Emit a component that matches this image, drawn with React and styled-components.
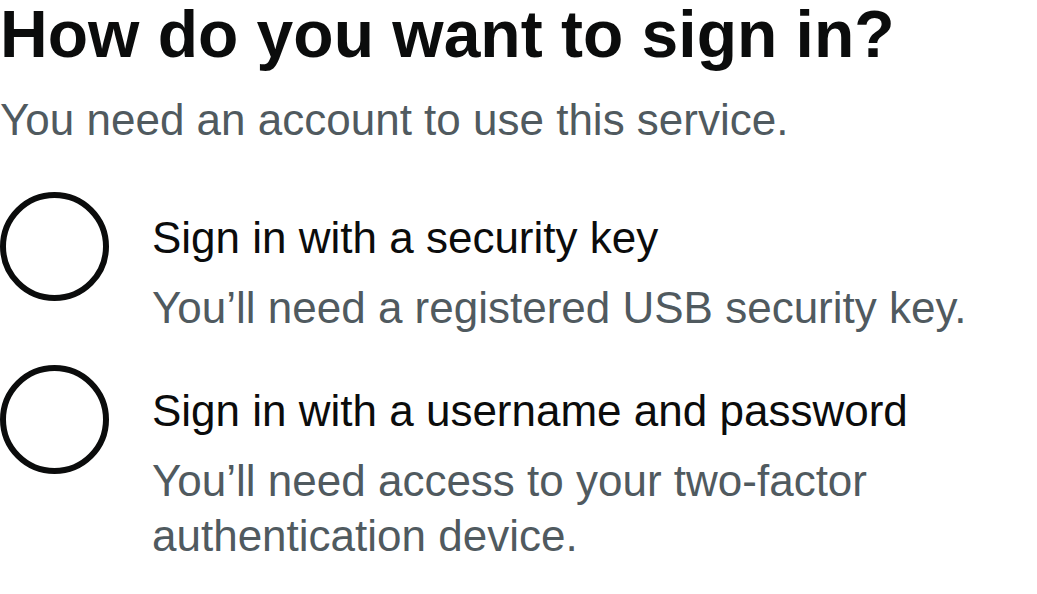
import React from 'react';
import styled, { createGlobalStyle } from 'styled-components';

const GlobalStyle = createGlobalStyle`
  html, body {
    margin: 0;
    padding: 0;
    background: #ffffff;
  }

  body {
    font-family: "Liberation Sans", Arial, sans-serif;
    color: #0b0c0c;
  }
`;

const options = [
  {
    id: 'security-key',
    label: 'Sign in with a security key',
    hint: 'You’ll need a registered USB security key.',
  },
  {
    id: 'password',
    label: 'Sign in with a username and password',
    hint: 'You’ll need access to your two-factor authentication device.',
  },
];

const App = () => (
  <>
    <GlobalStyle />
    <Page>
      <Fieldset>
        <Heading>How do you want to sign in?</Heading>
        <Lead>You need an account to use this service.</Lead>

        <Radios>
          {options.map((opt) => (
            <RadioItem key={opt.id}>
              <RadioInput type="radio" id={opt.id} name="sign-in" />
              <RadioText>
                <RadioLabel htmlFor={opt.id}>{opt.label}</RadioLabel>
                <Hint>{opt.hint}</Hint>
              </RadioText>
            </RadioItem>
          ))}
        </Radios>
      </Fieldset>
    </Page>
  </>
);

const Page = styled.main`
  width: 1037px;
  min-height: 594px;
  box-sizing: border-box;
`;

const Fieldset = styled.fieldset`
  margin: 0;
  padding: 0;
  border: 0;
  min-width: 0;
`;

const Heading = styled.h1`
  margin: 0;
  font-size: 66px;
  line-height: 68px;
  font-weight: 700;
  color: #0b0c0c;
`;

const Lead = styled.p`
  margin: 24px 0 0;
  font-size: 44px;
  line-height: 55px;
  color: #505a5f;
`;

const Radios = styled.div`
  display: flex;
  flex-direction: column;
  gap: 30px;
  margin-top: 45px;
`;

const RadioItem = styled.div`
  display: flex;
  align-items: flex-start;
  gap: 43px;
`;

const RadioInput = styled.input`
  appearance: none;
  -webkit-appearance: none;
  flex: none;
  width: 109px;
  height: 109px;
  margin: 0;
  box-sizing: border-box;
  border: 6px solid #0b0c0c;
  border-radius: 50%;
  background: transparent;
  cursor: pointer;

  &:checked {
    background: radial-gradient(circle, #0b0c0c 0 26px, transparent 27px);
  }
`;

const RadioText = styled.div`
  display: flex;
  flex-direction: column;
  padding-top: 18px;
`;

const RadioLabel = styled.label`
  font-size: 44px;
  line-height: 55px;
  color: #0b0c0c;
  cursor: pointer;
`;

const Hint = styled.div`
  margin-top: 15px;
  font-size: 44px;
  line-height: 55px;
  color: #505a5f;
`;

export default App;
